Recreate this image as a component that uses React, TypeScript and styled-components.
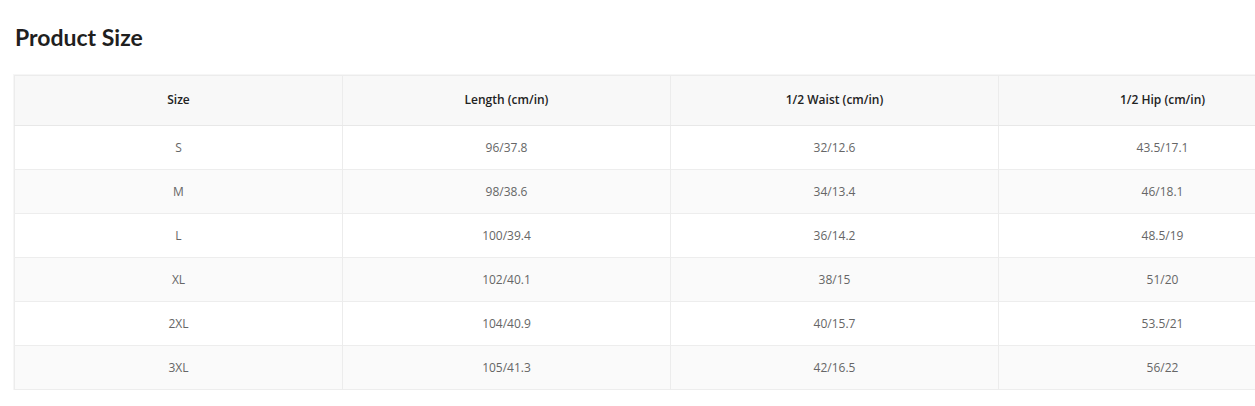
import React from "react";
import { styled, createGlobalStyle } from "styled-components";

const GlobalStyle = createGlobalStyle`
  body {
    margin: 0;
    background: #ffffff;
    font-family: "Open Sans", "Noto Sans", Arial, sans-serif;
  }
`;

const Page = styled.div`
  padding: 24px 0 0 14px;
  overflow: hidden;
`;

const Title = styled.h2`
  margin: 0 0 25px 1px;
  font-family: Lato, "Open Sans", sans-serif;
  font-weight: 700;
  font-size: 23px;
  line-height: 26px;
  color: #1f1f1f;
`;

const Table = styled.table`
  border-collapse: collapse;
  table-layout: fixed;
  width: 1310px;
  border: 1px solid #ececec;
  box-shadow: 0 0 0 1px #f6f6f6;
`;

const HeadCell = styled.th`
  width: 327px;
  height: 47px;
  padding: 0 0 2px;
  background: #f8f8f8;
  border-left: 1px solid #ececec;
  border-bottom: 1px solid #e8e8e8;
  font-size: 12px;
  font-weight: 600;
  color: #222;
  text-align: center;
  &:first-child {
    border-left: none;
  }
`;

const Row = styled.tr<{ $striped: boolean }>`
  background: ${(p) => (p.$striped ? "#fafafa" : "#ffffff")};
  border-bottom: 1px solid #ededed;
`;

const Cell = styled.td`
  height: 43px;
  padding: 0;
  border-left: 1px solid #ececec;
  font-size: 12px;
  color: #666;
  text-align: center;
  &:first-child {
    border-left: none;
  }
`;

const headers = ["Size", "Length (cm/in)", "1/2 Waist (cm/in)", "1/2 Hip (cm/in)"];

const rows = [
  ["S", "96/37.8", "32/12.6", "43.5/17.1"],
  ["M", "98/38.6", "34/13.4", "46/18.1"],
  ["L", "100/39.4", "36/14.2", "48.5/19"],
  ["XL", "102/40.1", "38/15", "51/20"],
  ["2XL", "104/40.9", "40/15.7", "53.5/21"],
  ["3XL", "105/41.3", "42/16.5", "56/22"],
];

export default function App() {
  return (
    <Page>
      <GlobalStyle />
      <Title>Product Size</Title>
      <Table>
        <thead>
          <tr>
            {headers.map((h) => (
              <HeadCell key={h}>{h}</HeadCell>
            ))}
          </tr>
        </thead>
        <tbody>
          {rows.map((r, i) => (
            <Row key={r[0]} $striped={i % 2 === 1}>
              {r.map((v, j) => (
                <Cell key={j}>{v}</Cell>
              ))}
            </Row>
          ))}
        </tbody>
      </Table>
    </Page>
  );
}
